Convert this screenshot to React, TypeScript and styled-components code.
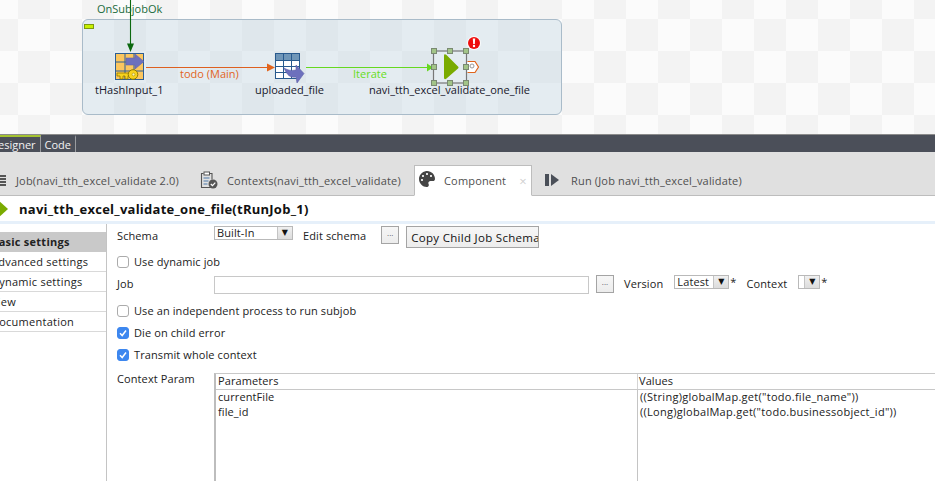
import { createGlobalStyle } from 'styled-components';
import styled from 'styled-components';
import { FaPalette } from 'react-icons/fa';

const GlobalStyle = createGlobalStyle`
	html, body {
		margin: 0;
		padding: 0;
		background: #fff;
	}
	* {
		box-sizing: border-box;
	}
`;

const Page = styled.div`
	width: 935px;
	height: 481px;
	overflow: hidden;
	display: flex;
	flex-direction: column;
	font-family: 'Open Sans', 'Noto Sans', sans-serif;
	font-size: 11px;
	letter-spacing: 0.1px;
	color: #222;
`;

const Canvas = styled.div`
	position: relative;
	height: 134px;
	flex: none;
	background-color: #fbfbfb;
	background-image: conic-gradient(#f3f3f3 25%, #fbfbfb 0 50%, #f3f3f3 0 75%, #fbfbfb 0);
	background-size: 64px 64px;
	background-position: 18px 19px;
`;

const Subjob = styled.div`
	position: absolute;
	left: 82px;
	top: 19px;
	width: 480px;
	height: 96px;
	border: 1px solid #a9bbc9;
	border-radius: 6px;
	background: rgba(185, 208, 222, 0.34);
`;

const Collapse = styled.span`
	position: absolute;
	left: 1px;
	top: 4px;
	width: 10px;
	height: 5px;
	background: #c8f000;
	border: 1px solid #7d9a10;
`;

const Wires = styled.svg`
	position: absolute;
	left: 0;
	top: 0;
`;

const NodeIcon = styled.svg<{ $x: number; $y: number }>`
	position: absolute;
	left: ${p => p.$x}px;
	top: ${p => p.$y}px;
`;

const NodeLabel = styled.span<{ $x: number; $y: number; $color?: string }>`
	position: absolute;
	left: ${p => p.$x}px;
	top: ${p => p.$y}px;
	color: ${p => p.$color || '#17172b'};
	font-size: 11px;
	line-height: 14px;
	letter-spacing: 0;
	white-space: nowrap;
`;

const EditorBar = styled.div`
	height: 18px;
	flex: none;
	display: flex;
	background: #4b4f59;
	border-top: 1px solid #8b8b8b;
`;

const EditorTab = styled.div<{ $active?: boolean }>`
	display: flex;
	align-items: center;
	height: 17px;
	padding: 0 4px;
	margin-left: ${p => (p.$active ? '-14px' : '0')};
	color: #f2f2f2;
	font-size: 11px;
	letter-spacing: 0;
	border-right: 1px solid #9a9ca0;
	border-top: 2px solid ${p => (p.$active ? '#a4c230' : 'transparent')};
`;

const TabStrip = styled.div`
	height: 44px;
	flex: none;
	display: flex;
	align-items: flex-end;
	background: #e0e0e0;
	border-bottom: 1px solid #bdbdbd;
`;

const ViewTab = styled.div<{ $active?: boolean; $width: number }>`
	width: ${p => p.$width}px;
	height: 31px;
	flex: none;
	display: flex;
	align-items: center;
	gap: 9px;
	padding-left: 4px;
	margin-bottom: -1px;
	color: #4f4f4f;
	font-size: 11px;
	letter-spacing: 0.17px;
	white-space: nowrap;
	background: ${p => (p.$active ? '#fff' : 'transparent')};
	border: 1px solid ${p => (p.$active ? '#bdbdbd' : 'transparent')};
	border-bottom-color: ${p => (p.$active ? '#fff' : '#bdbdbd')};
`;

const TabClose = styled.span`
	margin-left: 4px;
	color: #d0d0d0;
	font-size: 13px;
`;

const PaletteIcon = styled(FaPalette)`
	margin-top: -4px;
`;

const JobTabIcon = styled.svg`
	margin: 0 -1px 0 -7px;
`;

const ContextsTabIcon = styled.svg`
	margin-top: -2px;
`;

const RunTabIcon = styled.svg`
	margin: -2px 2px 0 7px;
`;

const TitleRow = styled.div`
	height: 25px;
	flex: none;
	display: flex;
	align-items: center;
	gap: 11px;
	margin-left: -8px;
	font-size: 13px;
	font-weight: 700;
	letter-spacing: 0.25px;
	color: #111;
	background: #fff;
`;

const TitleRule = styled.div`
	height: 3px;
	flex: none;
	background: #e6f0fa;
`;

const Body = styled.div`
	flex: 1;
	min-height: 0;
	display: flex;
`;

const SideNav = styled.nav`
	width: 107px;
	flex: none;
	padding-top: 8px;
	border-right: 1px solid #c4c4c4;
`;

const SideItem = styled.div<{ $active?: boolean }>`
	height: 20px;
	display: flex;
	align-items: center;
	letter-spacing: 0.25px;
	text-indent: -9px;
	white-space: nowrap;
	overflow: hidden;
	font-weight: ${p => (p.$active ? 700 : 400)};
	background: ${p => (p.$active ? '#c9c9c9' : '#fff')};
	border-bottom: 1px solid ${p => (p.$active ? '#c9c9c9' : '#d9d9d9')};
`;

const Form = styled.div`
	flex: 1;
	min-width: 0;
	padding-left: 10px;
	display: flex;
	flex-direction: column;
`;

const Row = styled.div<{ $height: number; $top?: number }>`
	height: ${p => p.$height}px;
	margin-top: ${p => p.$top || 0}px;
	flex: none;
	display: flex;
	align-items: center;
	white-space: nowrap;
`;

const FieldLabel = styled.span`
	width: 97px;
	flex: none;
	margin-top: -2px;
`;

const InlineLabel = styled.span<{ $left: number; $right: number }>`
	margin: -2px ${p => p.$right}px 0 ${p => p.$left}px;
`;

const CheckLabel = styled.span`
	margin-top: -2px;
`;

const SelectBox = styled.div<{ $width: number; $top: number }>`
	width: ${p => p.$width}px;
	height: 14px;
	flex: none;
	align-self: flex-start;
	margin-top: ${p => p.$top}px;
	display: flex;
	align-items: center;
	justify-content: space-between;
	padding-left: 2px;
	line-height: 12px;
	background: #fff;
	border: 1px solid #b9b9b9;
`;

const SelectArrow = styled.span`
	width: 15px;
	height: 12px;
	flex: none;
	margin-left: auto;
	display: flex;
	align-items: center;
	justify-content: center;
	background: linear-gradient(#f0f0f0, #dcdcdc);
	border-left: 1px solid #c4c4c4;
	color: #111;
	font-size: 8px;
	font-family: 'DejaVu Sans', sans-serif;
`;

const Star = styled.span`
	margin-left: 1px;
	align-self: flex-start;
	line-height: 14px;
`;

const DotsButton = styled.button<{ $top: number; $left?: number }>`
	width: 18px;
	height: 18px;
	flex: none;
	align-self: flex-start;
	margin-top: ${p => p.$top}px;
	margin-left: ${p => p.$left || 0}px;
	padding: 0 0 6px;
	font-size: 8px;
	font-family: inherit;
	color: #556;
	background: linear-gradient(#f6f6f6, #ececec);
	border: 1px solid #a4a4a4;
`;

const CopyButton = styled.button`
	width: 133px;
	height: 22px;
	flex: none;
	align-self: flex-start;
	margin: 2px 0 0 7px;
	overflow: hidden;
	padding: 0 0 0 4px;
	text-align: left;
	white-space: nowrap;
	font-family: inherit;
	font-size: 11.5px;
	letter-spacing: 0.3px;
	color: #111;
	background: linear-gradient(#f6f6f6, #ececec);
	border: 1px solid #a4a4a4;
`;

const TextInput = styled.div`
	width: 375px;
	height: 18px;
	flex: none;
	align-self: flex-start;
	margin-top: 1px;
	background: #fff;
	border: 1px solid #c8c8c8;
`;

const CheckBox = styled.span<{ $checked?: boolean }>`
	width: 12px;
	height: 12px;
	flex: none;
	margin-right: 5px;
	display: flex;
	align-items: center;
	justify-content: center;
	border-radius: 3px;
	background: ${p => (p.$checked ? '#3d87ef' : '#fff')};
	border: 1px solid ${p => (p.$checked ? '#3d87ef' : '#ababab')};
`;

const ParamSection = styled.div`
	flex: 1;
	min-height: 0;
	display: flex;
	padding-top: 7px;
`;

const ParamLabel = styled.span`
	width: 97px;
	flex: none;
	line-height: 11px;
`;

const ParamTable = styled.div`
	flex: 1;
	min-width: 0;
	display: grid;
	grid-template-columns: 421px 1fr;
	grid-template-rows: 16px 1fr;
	border-top: 1px solid #c8c8c8;
	border-left: 2px solid #bdbdbd;
`;

const HeadCell = styled.div<{ $divided?: boolean }>`
	padding-left: 2px;
	line-height: 14px;
	border-bottom: 1px solid #c8c8c8;
	box-shadow: ${p => (p.$divided ? 'inset 1px 0 0 #d4d4d4' : 'none')};
`;

const ValueCell = styled.div<{ $divided?: boolean }>`
	padding-left: 2px;
	line-height: 15px;
	white-space: nowrap;
	letter-spacing: ${p => (p.$divided ? '0.28px' : '0.1px')};
	border-left: ${p => (p.$divided ? '1px solid #c4c4c4' : 'none')};
	& > div {
		margin-top: -1px;
	}
`;

const ConnectionLines = () => (
	<Wires width="935" height="134" viewBox="0 0 935 134">
		<path d="M130.500 0V46" stroke="#0b680f" strokeWidth="1.100" fill="none" />
		<path d="M127 43.500h7l-3.500 8.500z" fill="#0b680f" />
		<path d="M146 67.500H269" stroke="#dd6020" strokeWidth="1" fill="none" />
		<path d="M267 63.500l8 4-8 4z" fill="#e2641c" />
		<path d="M306 67.500H430" stroke="#66d820" strokeWidth="1" fill="none" />
		<path d="M427 63.500l6 4-6 4z" fill="#66d820" />
	</Wires>
);

const HashInputIcon = () => (
	<NodeIcon $x={114} $y={52} width="32" height="32" viewBox="0 0 32 32">
		<rect x="1.500" y="1.500" width="28" height="26" fill="#fbc65f" stroke="#2c5e94" />
		<path d="M1.500 10h28M1.500 19h28M11 1.500v26M20 1.500v26" stroke="#2c5e94" strokeWidth="1" />
		<path d="M12 6h9V2l9 7.500-9 7.500v-4h-9z" fill="#6d70bd" stroke="#6466ac" strokeWidth=".6" />
		<path d="M3 21h13v3h-2v3h-3v-3H9v3H6v-3H3z" fill="#f7d21d" stroke="#8f7a00" strokeWidth=".8" />
		<circle cx="19" cy="22.500" r="4.800" fill="#f7d21d" stroke="#8f7a00" strokeWidth="1" />
		<circle cx="19.500" cy="22.500" r="1.400" fill="#fff7b0" stroke="#8f7a00" strokeWidth=".5" />
	</NodeIcon>
);

const TableFileIcon = () => (
	<NodeIcon $x={274} $y={52} width="32" height="32" viewBox="0 0 32 32">
		<rect x="1.500" y="1.500" width="24" height="25" fill="#fff" stroke="#285a8e" />
		<rect x="1.500" y="1.500" width="24" height="7" fill="#6f96b8" stroke="#285a8e" />
		<path d="M1.500 14.500h24M1.500 20.500h24M9.500 1.500v25M17.500 1.500v25" stroke="#285a8e" strokeWidth="1" />
		<path d="M10 16c4 2 6 3 12 2v-5l8 8.500-7 9.500-1-6c-6 1-9-2-12-9z" fill="#6d70bd" stroke="#5e60a8" strokeWidth=".6" />
	</NodeIcon>
);

const handlePoints = [
	[434, 51],
	[450, 51],
	[466, 51],
	[434, 67],
	[466, 67],
	[434, 83],
	[450, 83],
	[466, 83],
];

const RunJobIcon = () => (
	<Wires width="935" height="134" viewBox="0 0 935 134">
		<rect x="433.500" y="51" width="33" height="32" fill="none" stroke="#777" strokeWidth="1.200" />
		<path d="M444 56c0-2 1-2 2.500-1L458 66.500c.7.700.7 1.300 0 2L446.500 78.500c-1.500 1.200-2.500.7-2.500-1z" fill="#7aab00" />
		<path d="M467.500 61.500h7.500l3.500 5.500-3.500 5.500h-7.500" fill="#fff" stroke="#e0651c" strokeWidth="1.200" />
		<circle cx="472" cy="66" r="2" fill="none" stroke="#999" strokeWidth="1" />
		{handlePoints.map(([x, y]) => (
			<rect key={`${x}-${y}`} x={x - 2.500} y={y - 2.500} width="5" height="5" fill="#a2c488" stroke="#7a8a72" />
		))}
		<circle cx="474" cy="43" r="7" fill="#fff" opacity=".8" />
		<circle cx="474" cy="43" r="6" fill="#ee0d0d" />
		<path d="M472.800 38.500h2.400l-.4 5.500h-1.600z" fill="#fff" />
		<circle cx="474" cy="46" r="1.200" fill="#fff" />
	</Wires>
);

const StackIcon = () => (
	<JobTabIcon width="10" height="14" viewBox="0 0 10 14">
		<path d="M0 2h8M0 5h8M0 8h8M0 11h8" stroke="#555" strokeWidth="2" />
	</JobTabIcon>
);

const ContextsIcon = () => (
	<ContextsTabIcon width="18" height="18" viewBox="0 0 18 18">
		<path d="M3.500 2.500H1.500v14h9M10 2.500h2v6" fill="none" stroke="#555" strokeWidth="1.100" />
		<rect x="4" y="1" width="5.500" height="3" fill="#fff" stroke="#555" />
		<path d="M3.500 7h6M3.500 10h5M3.500 13h4" stroke="#4d79a8" strokeWidth="1" />
		<circle cx="13" cy="13" r="4.500" fill="#555" />
		<path d="M10.800 13l1.700 1.700 2.800-3" fill="none" stroke="#fff" strokeWidth="1.200" />
	</ContextsTabIcon>
);

const RunIcon = () => (
	<RunTabIcon width="16" height="14" viewBox="0 0 16 14">
		<rect x="1" y="1" width="4" height="12" fill="#4a4f58" />
		<path d="M7 1l8 6-8 6z" fill="#4a4f58" />
	</RunTabIcon>
);

const TickMark = () => (
	<svg width="10" height="10" viewBox="0 0 10 10">
		<path d="M2 5.200l2.200 2.300L8 2.500" fill="none" stroke="#fff" strokeWidth="1.500" />
	</svg>
);

const Check = ({ checked, label, top }: { checked?: boolean; label: string; top?: number }) => (
	<Row $height={22} $top={top}>
		<CheckBox $checked={checked}>{checked && <TickMark />}</CheckBox>
		<CheckLabel>{label}</CheckLabel>
	</Row>
);

const sideItems = ['Basic settings', 'Advanced settings', 'Dynamic settings', 'View', 'Documentation'];

const App = () => (
	<Page>
		<GlobalStyle />
		<Canvas>
			<Subjob>
				<Collapse />
			</Subjob>
			<ConnectionLines />
			<HashInputIcon />
			<TableFileIcon />
			<RunJobIcon />
			<NodeLabel $x={97} $y={2} $color="#1a6b3c">
				OnSubjobOk
			</NodeLabel>
			<NodeLabel $x={180} $y={67} $color="#e2641c">
				todo (Main)
			</NodeLabel>
			<NodeLabel $x={353} $y={67} $color="#66dd22">
				Iterate
			</NodeLabel>
			<NodeLabel $x={95} $y={83}>
				tHashInput_1
			</NodeLabel>
			<NodeLabel $x={255} $y={83}>
				uploaded_file
			</NodeLabel>
			<NodeLabel $x={369} $y={83}>
				navi_tth_excel_validate_one_file
			</NodeLabel>
		</Canvas>
		<EditorBar>
			<EditorTab $active>Designer</EditorTab>
			<EditorTab>Code</EditorTab>
		</EditorBar>
		<TabStrip>
			<ViewTab $width={195}>
				<StackIcon />
				Job(navi_tth_excel_validate 2.0)
			</ViewTab>
			<ViewTab $width={219}>
				<ContextsIcon />
				Contexts(navi_tth_excel_validate)
			</ViewTab>
			<ViewTab $active $width={118}>
				<PaletteIcon size={16} color="#444" />
				Component
				<TabClose>×</TabClose>
			</ViewTab>
			<ViewTab $width={230}>
				<RunIcon />
				Run (Job navi_tth_excel_validate)
			</ViewTab>
		</TabStrip>
		<TitleRow>
			<svg width="16" height="18" viewBox="0 0 16 18">
				<path d="M0 0h6l10 9-10 9H0z" fill="#7aab00" />
			</svg>
			navi_tth_excel_validate_one_file(tRunJob_1)
		</TitleRow>
		<TitleRule />
		<Body>
			<SideNav>
				{sideItems.map((item, i) => (
					<SideItem key={item} $active={i === 0}>
						{item}
					</SideItem>
				))}
			</SideNav>
			<Form>
				<Row $height={24}>
					<FieldLabel>Schema</FieldLabel>
					<SelectBox $width={79} $top={2}>
						Built-In
						<SelectArrow>▼</SelectArrow>
					</SelectBox>
					<InlineLabel $left={10} $right={15}>
						Edit schema
					</InlineLabel>
					<DotsButton $top={2}>...</DotsButton>
					<CopyButton>Copy Child Job Schema</CopyButton>
				</Row>
				<Check label="Use dynamic job" top={3} />
				<Row $height={19} $top={2}>
					<FieldLabel>Job</FieldLabel>
					<TextInput />
					<DotsButton $top={0} $left={7}>
						...
					</DotsButton>
					<InlineLabel $left={10} $right={11}>
						Version
					</InlineLabel>
					<SelectBox $width={55} $top={0}>
						Latest
						<SelectArrow>▼</SelectArrow>
					</SelectBox>
					<Star>*</Star>
					<InlineLabel $left={10} $right={11}>
						Context
					</InlineLabel>
					<SelectBox $width={22} $top={0}>
						<SelectArrow>▼</SelectArrow>
					</SelectBox>
					<Star>*</Star>
				</Row>
				<Check label="Use an independent process to run subjob" top={6} />
				<Check checked label="Die on child error" />
				<Check checked label="Transmit whole context" />
				<ParamSection>
					<ParamLabel>Context Param</ParamLabel>
					<ParamTable>
						<HeadCell>Parameters</HeadCell>
						<HeadCell $divided>Values</HeadCell>
						<ValueCell>
							<div>
								currentFile
								<br />
								file_id
							</div>
						</ValueCell>
						<ValueCell $divided>
							<div>
								((String)globalMap.get("todo.file_name"))
								<br />
								((Long)globalMap.get("todo.businessobject_id"))
							</div>
						</ValueCell>
					</ParamTable>
				</ParamSection>
			</Form>
		</Body>
	</Page>
);

export default App;
